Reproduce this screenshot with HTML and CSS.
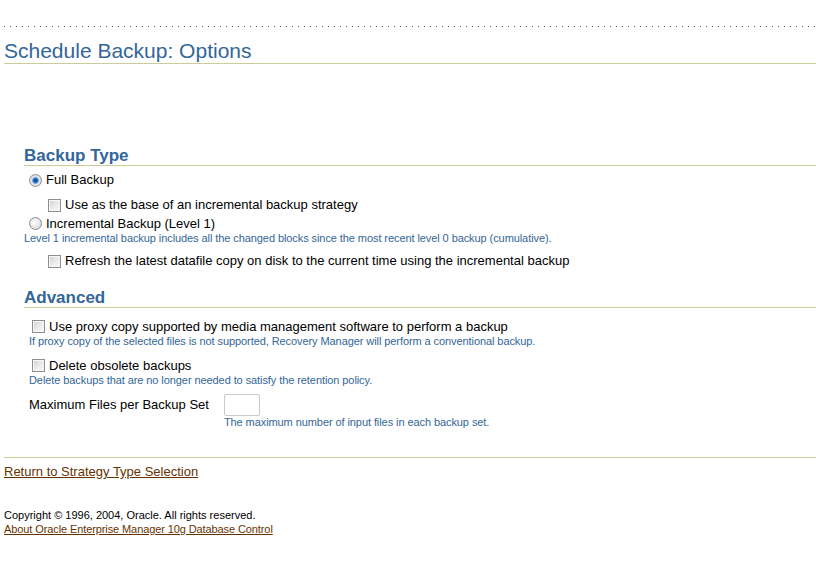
FILE: index.html
```html
<!DOCTYPE html>
<html>
<head>
<meta charset="utf-8">
<title>Schedule Backup: Options</title>
<link rel="stylesheet" href="styles.css">
</head>
<body>
<div class="dots"></div>
<h1 class="title">Schedule Backup: Options</h1>

<section class="section">
  <h2 class="sec-head">Backup Type</h2>
  <div class="sec-body">
    <label class="opt radio-row row-full"><input type="radio" name="bt" class="radio" checked>Full Backup</label>
    <label class="opt check-row sub row-base"><input type="checkbox" class="check">Use as the base of an incremental backup strategy</label>
    <label class="opt radio-row row-incr"><input type="radio" name="bt" class="radio">Incremental Backup (Level 1)</label>
    <div class="hint hint-flush">Level 1 incremental backup includes all the changed blocks since the most recent level 0 backup (cumulative).</div>
    <label class="opt check-row sub row-refresh"><input type="checkbox" class="check">Refresh the latest datafile copy on disk to the current time using the incremental backup</label>
  </div>
</section>

<section class="section adv">
  <h2 class="sec-head">Advanced</h2>
  <div class="adv-body">
    <label class="opt check-row row-proxy"><input type="checkbox" class="check">Use proxy copy supported by media management software to perform a backup</label>
    <div class="hint">If proxy copy of the selected files is not supported, Recovery Manager will perform a conventional backup.</div>
    <label class="opt check-row row-obsolete"><input type="checkbox" class="check">Delete obsolete backups</label>
    <div class="hint">Delete backups that are no longer needed to satisfy the retention policy.</div>
    <div class="maxfiles">
      <span class="mf-label">Maximum Files per Backup Set</span>
      <input type="text" class="mf-input">
      <span class="hint mf-hint">The maximum number of input files in each backup set.</span>
    </div>
  </div>
</section>

<div class="rule"></div>
<a class="link return" href="#">Return to Strategy Type Selection</a>

<div class="footer">
  <div class="copy">Copyright © 1996, 2004, Oracle. All rights reserved.</div>
  <a class="link about" href="#">About Oracle Enterprise Manager 10g Database Control</a>
</div>
</body>
</html>
```

FILE: styles.css
```css
html, body {
  margin: 0;
  padding: 0;
  background: #ffffff;
}
body {
  font-family: "Liberation Sans", Arial, sans-serif;
  font-size: 13px;
  color: #000000;
}
.dots {
  margin: 26px 0 0 4px;
  height: 1px;
  background-image: linear-gradient(to right, #3a5f86 1px, transparent 1px);
  background-size: 6px 1px;
  background-repeat: repeat-x;
}
.title {
  margin: 12px 0 0 4px;
  font-size: 21px;
  font-weight: normal;
  line-height: 24px;
  color: #336699;
  border-bottom: 1px solid #cccc99;
}
.section {
  margin-left: 24px;
}
.sec-head {
  margin: 82px 0 0 0;
  font-size: 17px;
  font-weight: bold;
  line-height: 19px;
  color: #336699;
  border-bottom: 1px solid #cccc99;
}
.adv .sec-head {
  margin-top: 17px;
}
.sec-body {
  display: flex;
  flex-direction: column;
  align-items: flex-start;
}
.opt {
  display: flex;
  align-items: center;
  height: 18px;
  line-height: 18px;
}
.radio-row {
  padding-left: 5px;
}
.row-full {
  margin-top: 4px;
  height: 20px;
}
.sub {
  padding-left: 24px;
}
.row-base {
  margin-top: 6px;
}
.row-incr {
  margin-top: 1px;
  height: 17px;
}
.row-refresh {
  margin-top: 6px;
  height: 20px;
}
.radio,
.check {
  -webkit-appearance: none;
  appearance: none;
  margin: 0 4px 0 0;
  width: 13px;
  height: 13px;
  box-sizing: border-box;
  flex: none;
}
.radio {
  border-radius: 50%;
  border: 1px solid #8d8d8d;
  background: radial-gradient(circle at 40% 40%, #ffffff 0, #e6e6e6 55%, #cfcfcf 100%);
}
.radio:checked {
  background: radial-gradient(circle at 50% 50%, #0b3d7a 0, #1d5aa5 1.6px, #6aa6e8 3px, #dfe6ee 3.8px, #d6d6d6 100%);
}
.check {
  border: 1px solid #8e8f8f;
  background: linear-gradient(135deg, #d2d2d2 0%, #eeeeee 60%, #fafafa 100%);
  box-shadow: inset 0 0 0 1px #f6f6f6;
}
.hint {
  font-size: 11px;
  line-height: 13px;
  color: #336699;
  letter-spacing: -0.08px;
}
.hint-flush {
  margin-top: 0;
}
.adv-body {
  padding-left: 5px;
  display: flex;
  flex-direction: column;
  align-items: flex-start;
}
.adv .check-row {
  padding-left: 3px;
}
.row-proxy {
  margin-top: 10px;
  height: 17px;
}
.row-obsolete {
  margin-top: 9px;
  height: 17px;
}
.maxfiles {
  margin-top: 7px;
  display: grid;
  grid-template-columns: auto auto;
  column-gap: 15px;
  row-gap: 0;
  align-items: center;
}
.mf-label {
  line-height: 22px;
}
.mf-input {
  width: 36px;
  height: 22px;
  box-sizing: border-box;
  margin: 0;
  padding: 0 2px;
  border: 1px solid #c9c9c9;
  border-radius: 2px;
  background: #ffffff;
  font: inherit;
}
.mf-hint {
  grid-column: 2;
  white-space: nowrap;
}
.rule {
  margin: 28px 0 0 4px;
  height: 1px;
  background: #cccc99;
}
.link {
  color: #663300;
  text-decoration: underline;
}
.return {
  display: inline-block;
  margin: 6px 0 0 4px;
  font-size: 13px;
  line-height: 16px;
}
.footer {
  margin: 28px 0 0 4px;
  font-size: 11px;
  line-height: 14px;
}
.about {
  display: inline-block;
  letter-spacing: -0.1px;
}
```
